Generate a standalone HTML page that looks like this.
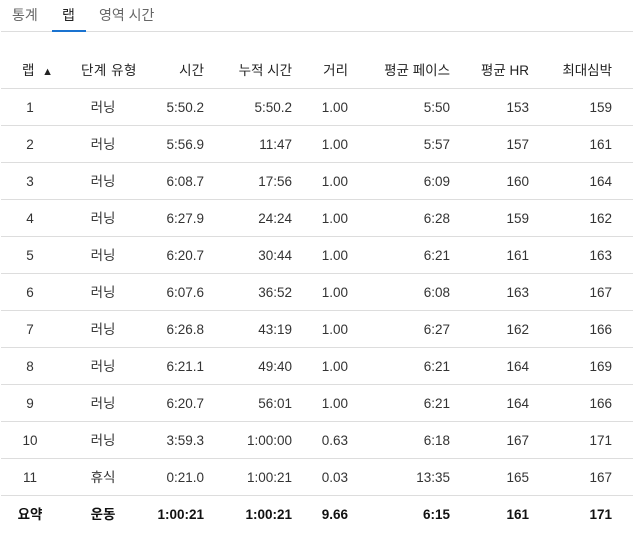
<!DOCTYPE html>
<html><head><meta charset="utf-8"><style>
*{margin:0;padding:0;box-sizing:border-box}
body{width:633px;height:534px;background:#fff;position:relative;overflow:hidden;font-family:"Liberation Sans","Noto Sans CJK KR",sans-serif;font-size:13.5px;color:#333}
.a{position:absolute;white-space:nowrap;line-height:18px}
.tab{position:absolute;top:6px;font-size:14px;color:#666;line-height:18px}
.ln{position:absolute;left:1px;right:0;height:1px;background:#ddd}
.r{text-align:right}
.c{text-align:center}
.b{font-weight:bold;color:#111}
</style></head><body>
<div class="tab" style="left:12px">통계</div>
<div class="tab" style="left:62px;color:#222">랩</div>
<div class="tab" style="left:99px">영역 시간</div>
<div class="ln" style="top:31px"></div>
<div style="position:absolute;left:52px;top:30px;width:34px;height:2px;background:#1a73d0"></div>
<div id="t"></div>
<script>
var rows=[["1","러닝","5:50.2","5:50.2","1.00","5:50","153","159"],
["2","러닝","5:56.9","11:47","1.00","5:57","157","161"],
["3","러닝","6:08.7","17:56","1.00","6:09","160","164"],
["4","러닝","6:27.9","24:24","1.00","6:28","159","162"],
["5","러닝","6:20.7","30:44","1.00","6:21","161","163"],
["6","러닝","6:07.6","36:52","1.00","6:08","163","167"],
["7","러닝","6:26.8","43:19","1.00","6:27","162","166"],
["8","러닝","6:21.1","49:40","1.00","6:21","164","169"],
["9","러닝","6:20.7","56:01","1.00","6:21","164","166"],
["10","러닝","3:59.3","1:00:00","0.63","6:18","167","171"],
["11","휴식","0:21.0","1:00:21","0.03","13:35","165","167"]];
var h='';
function cells(r,y,cls){
 h+='<div class="a c '+cls+'" style="left:0;width:60px;top:'+y+'px">'+r[0]+'</div>';
 h+='<div class="a c '+cls+'" style="left:78px;width:50px;top:'+y+'px">'+r[1]+'</div>';
 var rights=[204,292,348,450,529,612];
 for(var i=0;i<6;i++)h+='<div class="a r '+cls+'" style="left:'+(rights[i]-100)+'px;width:100px;top:'+y+'px">'+r[i+2]+'</div>';
}
h+='<div class="a" style="left:22px;top:62px;color:#222">랩 <span style="font-size:11px;margin-left:4px">▲</span></div>';
h+='<div class="a" style="left:81px;top:62px;color:#222;letter-spacing:0.5px">단계 유형</div>';
var hd=["시간","누적 시간","거리","평균 페이스","평균 HR","최대심박"],hr=[204,292,348,450,529,612];
for(var i=0;i<6;i++)h+='<div class="a r" style="left:'+(hr[i]-100)+'px;width:100px;top:62px;color:#222">'+hd[i]+'</div>';
h+='<div class="ln" style="top:88px"></div>';
for(var k=0;k<rows.length;k++){cells(rows[k],99+37*k,'');h+='<div class="ln" style="top:'+(125+37*k)+'px"></div>';}
cells(["요약","운동","1:00:21","1:00:21","9.66","6:15","161","171"],506,'b');
document.getElementById('t').innerHTML=h;
</script>
</body></html>
